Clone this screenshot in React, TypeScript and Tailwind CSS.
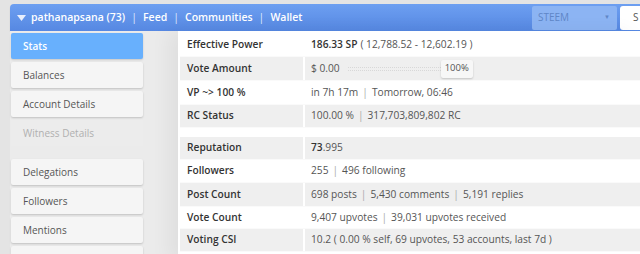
import React from 'react'

const font = { fontFamily: '"Open Sans", "Noto Sans", sans-serif' }

function Sep() {
  return <span className="px-[4px] text-[#aaa]">|</span>
}

function NavItem({ label, active, disabled }: { label: string; active?: boolean; disabled?: boolean }) {
  if (active) {
    return (
      <div className="flex h-[26px] items-center rounded-[2px] bg-[#68b0fd] pl-[12px] text-[10px] font-semibold text-white shadow-[0_1px_2px_rgba(0,0,0,0.15)]">
        {label}
      </div>
    )
  }
  return (
    <div
      className={
        disabled
          ? 'flex h-[26px] items-center rounded-[2px] bg-[#ececec] pl-[12px] text-[10px] text-[#b0b0b0]'
          : 'flex h-[26px] items-center rounded-[2px] bg-[#f5f5f5] pl-[12px] text-[10px] text-[#555] shadow-[0_1px_2px_rgba(0,0,0,0.18)]'
      }
    >
      {label}
    </div>
  )
}

function Row({ label, h, gray, children }: { label: string; h: string; gray?: boolean; children: React.ReactNode }) {
  return (
    <div className={`flex ${h} ${gray ? 'bg-[#efefef]' : 'bg-white'} border-b border-[#fafafa]`}>
      <div className="flex w-[125px] shrink-0 items-center border-r-2 border-white pl-[7px] text-[10.2px] font-semibold text-[#333]">
        {label}
      </div>
      <div className="flex flex-1 items-center whitespace-nowrap pl-[6px] text-[10.2px] text-[#555]">{children}</div>
    </div>
  )
}

export default function App() {
  return (
    <div className="h-[254px] w-[640px] overflow-hidden bg-[#e4e4e4] pl-[10px] pt-[4px]" style={font}>
      {/* top bar */}
      <div className="flex h-[27px] w-[650px] items-center rounded-tl-[4px] bg-gradient-to-b from-[#6d9ff1] to-[#5688e2] shadow-[0_1px_1px_rgba(0,0,0,0.2)]">
        <svg width="9" height="6" viewBox="0 0 9 6" className="ml-[7px] mr-[5px]">
          <path d="M0 0 L9 0 L4.5 6 Z" fill="#e8eefc" />
        </svg>
        <div className="flex items-center text-[10.5px] font-semibold text-white">
          <span>pathanapsana (73)</span>
          <span className="px-[6px] font-normal text-[#dfe9fb]">|</span>
          <span>Feed</span>
          <span className="px-[6px] font-normal text-[#dfe9fb]">|</span>
          <span>Communities</span>
          <span className="px-[6px] font-normal text-[#dfe9fb]">|</span>
          <span>Wallet</span>
        </div>
        <div className="ml-auto flex h-[24px] w-[85px] shrink-0 items-center rounded-[2px] bg-[#8cb4f3] pl-[6px] text-[10px] text-[#5f86c7]">
          <span>STEEM</span>
          <span className="ml-auto mr-[7px] text-[6px] text-[#5f86c7]">▼</span>
        </div>
        <div className="ml-[3px] flex h-[24px] w-[40px] shrink-0 items-center rounded-l-[3px] bg-white pl-[13px] text-[10px] text-[#555]">
          S
        </div>
      </div>

      <div className="flex">
        {/* sidebar */}
        <div className="flex w-[168px] shrink-0 flex-col gap-[3px] bg-[#ebebeb] pl-[1px] pr-[35px] pt-[2px]">
          <NavItem label="Stats" active />
          <NavItem label="Balances" />
          <NavItem label="Account Details" />
          <NavItem label="Witness Details" disabled />
          <div className="h-[7px]" />
          <NavItem label="Delegations" />
          <NavItem label="Followers" />
          <NavItem label="Mentions" />
          <NavItem label="" />
        </div>

        {/* main */}
        <div className="h-[230px] flex-1 bg-white pl-[2px] pt-[2px] shadow-[-10px_0_18px_rgba(0,0,0,0.05)]">
          <Row label="Effective Power" h="h-[24px]">
            <span className="font-semibold text-[#333]">186.33 SP</span>
            <span className="ml-[3px]">( 12,788.52 - 12,602.19 )</span>
          </Row>
          <Row label="Vote Amount" h="h-[24px]" gray>
            <span>$ 0.00</span>
            <div className="ml-[8px] h-[4px] w-[93px] border-y border-dotted border-[#d8d8d8]" />
            <span className="flex h-[18px] items-center rounded-[2px] bg-[#f7f7f7] px-[4px] text-[9.5px] shadow-[0_1px_2px_rgba(0,0,0,0.18)]">
              100%
            </span>
          </Row>
          <Row label="VP ~> 100 %" h="h-[24px]">
            <span>in 7h 17m</span>
            <Sep />
            <span>Tomorrow, 06:46</span>
          </Row>
          <Row label="RC Status" h="h-[23px]" gray>
            <span>100.00 %</span>
            <Sep />
            <span>317,703,809,802 RC</span>
          </Row>
          <div className="h-[9px] bg-white" />
          <Row label="Reputation" h="h-[23px]" gray>
            <span className="font-semibold text-[#333]">73</span>
            <span>.995</span>
          </Row>
          <Row label="Followers" h="h-[23px]">
            <span>255</span>
            <Sep />
            <span>496 following</span>
          </Row>
          <Row label="Post Count" h="h-[24px]" gray>
            <span>698 posts</span>
            <Sep />
            <span>5,430 comments</span>
            <Sep />
            <span>5,191 replies</span>
          </Row>
          <Row label="Vote Count" h="h-[22px]">
            <span>9,407 upvotes</span>
            <Sep />
            <span>39,031 upvotes received</span>
          </Row>
          <Row label="Voting CSI" h="h-[23px]" gray>
            <span>10.2 ( 0.00 % self, 69 upvotes, 53 accounts, last 7d )</span>
          </Row>
        </div>
      </div>
    </div>
  )
}
